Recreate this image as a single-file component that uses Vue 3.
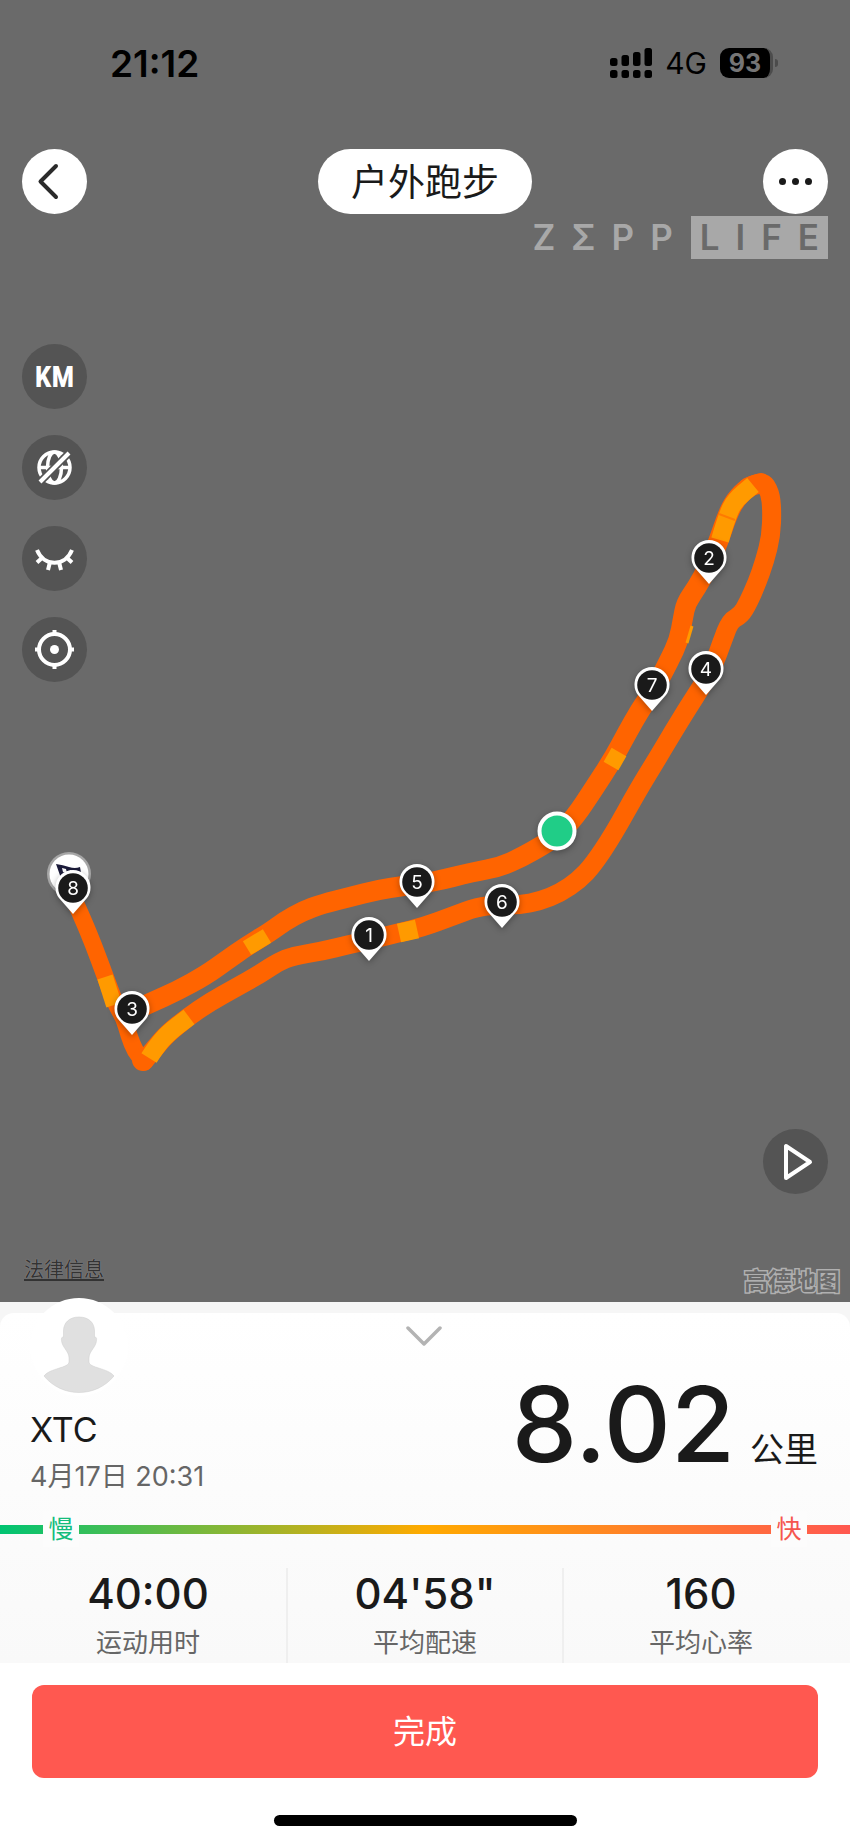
<script setup>
import { computed, ref } from 'vue'

// 轨迹坐标，基于 850 x 1302 的地图画布
const upperTrack = [
  [133, 1011], [150, 1003], [177, 991], [206, 975], [227, 960], [247, 946], [270, 932],
  [285, 921], [303, 911], [322, 904], [350, 897], [377, 890], [403, 886], [433, 882],
  [473, 872], [500, 867], [522, 857], [543, 845], [557, 836], [575, 817], [593, 790],
  [613, 759], [627, 733], [640, 710], [655, 688], [669, 661], [679, 640], [683, 618],
  [686, 603], [697, 587], [708, 567], [719, 540], [727, 516], [735, 500], [748, 487],
  [761, 483],
]
const lowerTrack = [
  [748, 487], [762, 480], [770, 492], [772, 510], [771, 536], [765, 560], [757, 583],
  [748, 603], [741, 615], [730, 621], [722, 642], [713, 667], [700, 689], [689, 706],
  [673, 732], [657, 759], [638, 790], [613, 835], [593, 865], [579, 880], [560, 893],
  [540, 901], [520, 905], [497, 905], [477, 907], [453, 916], [423, 927], [398, 933],
  [370, 940], [347, 945], [323, 951], [293, 956], [278, 962], [260, 974], [237, 987],
  [210, 1002], [188, 1017], [167, 1034], [155, 1048], [144, 1061],
]
const leftTrack = [
  [72, 895], [82, 917], [94, 946], [105, 976], [116, 1005], [124, 1018], [129, 1036],
  [135, 1051], [143, 1061],
]

// 配速较慢的路段
const slowParts = [
  { width: 18, points: [[720, 540], [727, 516], [735, 500], [753, 485]] },
  { width: 17, points: [[611, 766], [619, 752]] },
  { width: 19, points: [[399, 933], [417, 929]] },
  { width: 16, points: [[247, 948], [267, 936]] },
  { width: 16, points: [[105, 977], [114, 1005]] },
  { width: 18, points: [[149, 1058], [156, 1047], [168, 1033], [189, 1017]] },
  { width: 3, points: [[692, 626], [687, 643]] },
]

const kmPins = [
  { km: 1, x: 369, y: 935 },
  { km: 2, x: 709, y: 558 },
  { km: 4, x: 706, y: 669 },
  { km: 7, x: 652, y: 685 },
  { km: 5, x: 417, y: 882 },
  { km: 6, x: 502, y: 902 },
  { km: 3, x: 132, y: 1009 },
  { km: 8, x: 73, y: 888 },
]

const stats = ref([
  { value: '40:00', label: '运动用时' },
  { value: '04\'58"', label: '平均配速' },
  { value: '160', label: '平均心率' },
])

// 用相邻点的中点做二次贝塞尔平滑
function smoothPath(points) {
  let d = `M${points[0][0]} ${points[0][1]}`
  for (let i = 1; i < points.length - 1; i++) {
    const [x, y] = points[i]
    const [nx, ny] = points[i + 1]
    d += ` Q${x} ${y} ${(x + nx) / 2} ${(y + ny) / 2}`
  }
  const last = points[points.length - 1]
  return d + ` L${last[0]} ${last[1]}`
}

const upperPath = computed(() => smoothPath(upperTrack))
const lowerPath = computed(() => smoothPath(lowerTrack))
const leftPath = computed(() => smoothPath(leftTrack))
</script>

<template>
  <main class="page">
    <section class="map">
      <svg class="track" viewBox="0 0 850 1302" role="img" aria-label="跑步轨迹">
        <g fill="none" stroke="#ff6400" stroke-linejoin="round" stroke-linecap="round">
          <path :d="upperPath" stroke-width="20" />
          <path :d="lowerPath" stroke-width="19" />
          <path :d="leftPath" stroke-width="17" />
          <path d="M143 1059v1" stroke-width="22" />
        </g>
        <path
          v-for="(part, index) in slowParts"
          :key="index"
          :d="smoothPath(part.points)"
          :stroke-width="part.width"
          fill="none"
          stroke="#ff9a00"
        />
        <path d="M719 514l16 6" stroke="#ff7a00" stroke-width="2" />

        <circle cx="69" cy="874" r="22" fill="#a6a6a6" />
        <circle cx="69" cy="874" r="19.500" fill="#fff" />
        <path d="M56 864q7 1 13 3q6 2 11 0l2 11q-6 2-11 0l-8-3 1 6h-2z" fill="#1c1c3a" />
        <path d="M62 868l4 1 1 4-4-1zM70 870l4 1v3l5 0 1 4-5-1-5-3zM65 875l4 2 0 5-4 0z" fill="#fff" />

        <circle class="shadow" cx="557" cy="831" r="17.500" fill="#20cd87" stroke="#fff" stroke-width="4" />

        <g
          v-for="pin in kmPins"
          :key="pin.km"
          class="shadow"
          :transform="`translate(${pin.x} ${pin.y})`"
        >
          <path d="M0 26L-14 10A17.500 17.500 0 1 1 14 10z" fill="#fff" />
          <circle r="14.800" fill="#1a1a1a" />
          <text class="pin-text" y="7" text-anchor="middle">{{ pin.km }}</text>
        </g>
      </svg>

      <header class="status">
        <span class="clock">21:12</span>
        <div class="status-right">
          <svg width="42" height="30" viewBox="0 0 42 30" aria-hidden="true">
            <rect x="0" y="10" width="7.500" height="8" rx="2.500" />
            <rect x="11.500" y="7" width="7.500" height="11" rx="2.500" />
            <rect x="23" y="4" width="7.500" height="14" rx="2.500" />
            <rect x="34.500" y="0" width="7.500" height="18" rx="2.500" />
            <rect x="0" y="22" width="7.500" height="8" rx="2.500" />
            <rect x="11.500" y="22" width="7.500" height="8" rx="2.500" />
            <rect x="23" y="22" width="7.500" height="8" rx="2.500" />
            <rect x="34.500" y="22" width="7.500" height="8" rx="2.500" />
          </svg>
          <span class="network">4G</span>
          <div class="battery"><span class="battery-level">93</span></div>
        </div>
      </header>

      <nav class="nav">
        <button class="round white" aria-label="返回">
          <svg width="65" height="65" viewBox="0 0 65 65">
            <path d="M34 17L18.500 32.500L34 48" fill="none" stroke="#2b2b2b" stroke-width="4" stroke-linejoin="round" stroke-linecap="round" />
          </svg>
        </button>
        <h1 class="title">户外跑步</h1>
        <button class="round white" aria-label="更多">
          <svg width="65" height="65" viewBox="0 0 65 65" fill="#1a1a1a">
            <circle cx="19.500" cy="32.500" r="3.500" />
            <circle cx="32.500" cy="32.500" r="3.500" />
            <circle cx="45.500" cy="32.500" r="3.500" />
          </svg>
        </button>
      </nav>

      <div class="brand">
        <div class="brand-word">
          <span>Z</span><span>Σ</span><span>P</span><span>P</span>
        </div>
        <div class="brand-word boxed">
          <span>L</span><span>I</span><span>F</span><span>E</span>
        </div>
      </div>

      <div class="tools">
        <button class="round km">KM</button>
        <button class="round" aria-label="隐藏地图">
          <svg width="65" height="65" viewBox="0 0 65 65" fill="none" stroke="#fff" stroke-width="3.500">
            <circle cx="32.500" cy="32.500" r="15.500" />
            <ellipse cx="32.500" cy="32.500" rx="7" ry="15.500" />
            <path d="M17 32.500h31" />
            <path d="M17 48L48 17" stroke="#545454" stroke-width="7.500" />
            <path d="M18 47L47 18" stroke-width="4" />
          </svg>
        </button>
        <button class="round" aria-label="隐藏标记">
          <svg width="65" height="65" viewBox="0 0 65 65" fill="none" stroke="#fff" stroke-width="4">
            <path d="M15 24C22 41 43 41 50 24" />
            <path d="M21 31l-6 5.500M28 36l-2 8M37 36l2 8M44 31l6 5.500" />
          </svg>
        </button>
        <button class="round" aria-label="定位">
          <svg width="65" height="65" viewBox="0 0 65 65" fill="none" stroke="#fff" stroke-width="4">
            <circle cx="32.500" cy="32.500" r="15.500" />
            <circle cx="32.500" cy="32.500" r="4.500" fill="#fff" stroke="none" />
            <path d="M32.500 13v5M32.500 47v5M13 32.500h5M47 32.500h5" />
          </svg>
        </button>
      </div>

      <button class="round play" aria-label="播放轨迹">
        <svg width="65" height="65" viewBox="0 0 65 65">
          <path d="M23 17v32l24-16z" fill="none" stroke="#fff" stroke-width="4" stroke-linejoin="round" />
        </svg>
      </button>

      <footer class="map-foot">
        <a class="legal" href="#">法律信息</a>
        <span class="provider">高德地图</span>
      </footer>
    </section>

    <section class="sheet">
      <div class="card">
        <div class="card-top">
          <div class="user">
            <svg class="avatar" width="98" height="98" viewBox="0 0 98 98" aria-hidden="true">
              <circle cx="49" cy="49" r="49" fill="#fff" />
              <path
                d="M49 19C39 19 33.500 25 33.500 33V39C31 39 31 41 32 45C34 51 39 54 39 60V64C39 70 20 70 14 78C32 100 66 100 84 78C78 70 59 70 59 64V60C59 54 64 51 66 45C67 41 67 39 64.500 39V33C64.500 25 59 19 49 19z"
                fill="#e0e0e0"
                stroke="#cdcdcd"
                stroke-width="0.500"
              />
            </svg>
            <div class="name">XTC</div>
            <time class="date">4月17日 20:31</time>
          </div>
          <button class="collapse" aria-label="收起">
            <svg width="36" height="20" viewBox="0 0 36 20">
              <path d="M2 2L18 18L34 2" fill="none" stroke="#b3b3b3" stroke-width="3.500" stroke-linecap="round" stroke-linejoin="round" />
            </svg>
          </button>
          <div class="distance">
            <span class="distance-value">8.02</span>
            <span class="distance-unit">公里</span>
          </div>
        </div>

        <div class="pace">
          <span class="pace-label slow">慢</span>
          <span class="pace-label fast">快</span>
        </div>

        <dl class="stats">
          <div v-for="item in stats" :key="item.label" class="stat">
            <dd>{{ item.value }}</dd>
            <dt>{{ item.label }}</dt>
          </div>
        </dl>
      </div>
    </section>

    <div class="actions">
      <button class="done">完成</button>
      <div class="home-bar"></div>
    </div>
  </main>
</template>

<style>
body {
  background: #fff;
}
</style>

<style scoped>
.page {
  font-family: Inter, 'Noto Sans CJK SC', sans-serif;
  color: #1a1a1a;
}

button {
  border: none;
  padding: 0;
  background: none;
  font-family: inherit;
  cursor: pointer;
}

svg {
  display: block;
}

.map {
  position: relative;
  display: flex;
  flex-direction: column;
  aspect-ratio: 850 / 1302;
  background: #6a6a6a;
}

.track {
  position: absolute;
  inset: 0;
  width: 100%;
  height: 100%;
}

.shadow {
  filter: drop-shadow(0 2px 3px rgba(0, 0, 0, 0.3));
}

.pin-text {
  font-size: 19px;
  fill: #fff;
}

.status,
.nav,
.brand,
.tools,
.play,
.map-foot {
  position: relative;
}

.status {
  display: flex;
  justify-content: space-between;
  align-items: center;
  height: 30px;
  padding: 48px 72px 71px 110px;
  color: #000;
}

.clock {
  font-size: 37px;
  font-weight: 600;
}

.status-right {
  display: flex;
  align-items: center;
}

.network {
  margin: 0 13px;
  font-size: 30px;
}

.battery {
  display: flex;
  align-items: center;
}

.battery::after {
  content: '';
  width: 3px;
  height: 8px;
  margin-left: 2px;
  border-radius: 0 4px 4px 0;
  background: #4c4c4c;
}

.battery-level {
  width: 50px;
  border-right: 3px solid #4c4c4c;
  border-radius: 9px;
  background: #000;
  color: #757575;
  font-size: 25px;
  font-weight: 700;
  line-height: 30px;
  text-align: center;
}

.nav {
  display: flex;
  justify-content: space-between;
  padding: 0 22px;
}

.round {
  display: flex;
  justify-content: center;
  align-items: center;
  width: 65px;
  height: 65px;
  border-radius: 50%;
  background: #545454;
}

.white {
  background: #fff;
}

.title {
  margin: 0;
  padding: 3px 33px 0;
  border-radius: 33px;
  background: #fff;
  font-size: 37px;
  font-weight: 400;
  line-height: 62px;
}

.brand {
  display: flex;
  justify-content: flex-end;
  gap: 18px;
  margin-top: 2px;
  padding: 0 22px;
  color: #a8a8a8;
}

.brand-word {
  display: flex;
  gap: 16px;
  font-size: 35px;
  font-weight: 600;
  line-height: 43px;
}

.boxed {
  padding: 0 9px;
  background: #a8a8a8;
  color: #6a6a6a;
}

.tools {
  display: flex;
  flex-direction: column;
  gap: 26px;
  margin: 85px 22px 0;
}

.km {
  color: #fff;
  font-family: 'Roboto Condensed', Roboto, sans-serif;
  font-size: 30px;
  font-weight: 700;
}

.play {
  margin: auto 22px 61px auto;
}

.map-foot {
  display: flex;
  justify-content: space-between;
  height: 42px;
  padding: 0 10px 5px 24px;
  line-height: 30px;
}

.legal {
  color: #333;
  font-size: 20px;
  text-decoration-thickness: 2px;
  text-shadow: 0 0 1px #aaa;
  text-underline-offset: 2px;
}

.provider {
  align-self: flex-end;
  color: #6a6a6a;
  font-size: 24px;
  font-weight: 700;
  -webkit-text-stroke: 3px #b0b0b0;
  paint-order: stroke fill;
}

.sheet {
  padding-top: 11px;
  background: #f6f6f6;
}

.card {
  border-radius: 14px 14px 0 0;
  background: linear-gradient(#fff, #f9f9f9);
}

.card-top {
  display: grid;
  grid-template-columns: 1fr 36px 1fr;
  padding: 0 32px 0 30px;
}

.user {
  margin-top: -15px;
}

.avatar {
  position: relative;
}

.name {
  margin-top: 14px;
  font-size: 34px;
  line-height: 40px;
}

.date {
  display: block;
  margin-top: 11px;
  color: #666;
  font-size: 27px;
  line-height: 32px;
}

.collapse {
  align-self: start;
  margin-top: 13px;
}

.distance {
  display: flex;
  justify-content: flex-end;
  align-items: baseline;
  gap: 15px;
  align-self: end;
  line-height: 86px;
  white-space: nowrap;
}

.distance-value {
  font-size: 104px;
  font-weight: 500;
}

.distance-unit {
  font-size: 34px;
}

.pace {
  display: flex;
  justify-content: space-between;
  margin-top: 18px;
  padding: 0 43px;
  background: linear-gradient(90deg, #00c472, #ffaa00 50%, #ff5850) center / 100% 9px no-repeat;
}

.pace-label {
  width: 36px;
  background: #fcfcfc;
  font-size: 25px;
  line-height: 36px;
  text-align: center;
}

.slow {
  color: #14bd7c;
}

.fast {
  color: #f5564e;
}

.stats {
  display: grid;
  grid-template-columns: repeat(3, 1fr);
  margin: 0;
  padding: 21px 12px 0 10px;
}

.stat {
  display: flex;
  flex-direction: column;
  align-items: center;
  height: 95px;
}

.stat + .stat {
  border-left: 2px solid #efefef;
}

.stat dd {
  margin: 0;
  font-size: 42px;
  font-weight: 500;
  line-height: 52px;
}

.stat dt {
  color: #666;
  font-size: 26px;
  line-height: 46px;
}

.actions {
  display: flex;
  flex-direction: column;
  align-items: center;
  padding: 22px 32px 17px;
  background: #fff;
}

.done {
  width: 100%;
  border-radius: 12px;
  background: #ff5850;
  color: #fff;
  font-size: 32px;
  line-height: 93px;
}

.home-bar {
  width: 303px;
  height: 11px;
  margin-top: 37px;
  border-radius: 6px;
  background: #000;
}
</style>
